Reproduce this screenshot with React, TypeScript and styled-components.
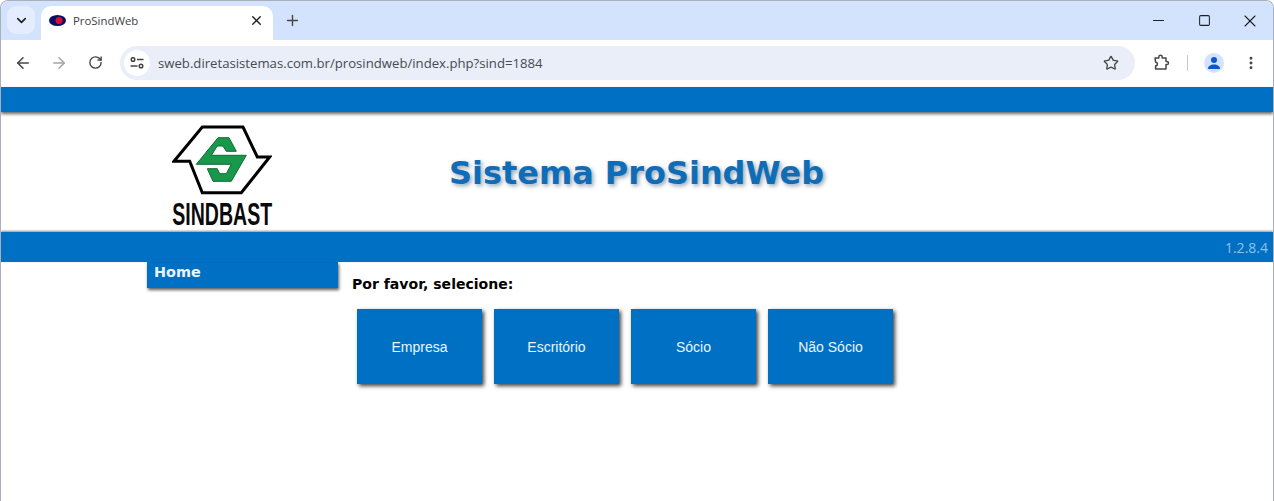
import React from "react";
import styled, { createGlobalStyle } from "styled-components";
import { ArrowLeft, ArrowRight, ChevronDown, EllipsisVertical, Minus, Plus, RotateCw, Square, Star, X } from "lucide-react";

const GlobalStyle = createGlobalStyle`
  html, body {
    margin: 0;
    padding: 0;
    background: #fff;
  }
  body {
    font-family: "Liberation Sans", Arial, sans-serif;
    overflow: hidden;
  }
`;

const Window = styled.div`
  width: 1274px;
  height: 501px;
  box-sizing: border-box;
  border: 1px solid #a9b0bb;
  border-bottom: 0;
  border-radius: 8px 8px 0 0;
  overflow: hidden;
  background: #fff;
  display: flex;
  flex-direction: column;
`;

const TabStrip = styled.div`
  height: 39px;
  background: #d3e3fd;
  display: flex;
  align-items: flex-end;
  padding-left: 6px;
  color: #1f1f1f;
`;

const TabSearch = styled.div`
  width: 28px;
  height: 28px;
  margin-bottom: 6px;
  border-radius: 9px;
  background: #e4edfd;
  display: flex;
  align-items: center;
  justify-content: center;
`;

const Tab = styled.div`
  width: 232px;
  height: 34px;
  margin-left: 6px;
  box-sizing: border-box;
  padding: 0 9px 5px 8px;
  background: #fff;
  border-radius: 10px 10px 0 0;
  display: flex;
  align-items: center;
  font-family: "Open Sans", "Noto Sans", sans-serif;
  font-size: 11.4px;
  color: #3c4043;
`;

const TabTitle = styled.span`
  flex: 1;
  margin-left: 7px;
`;

const NewTab = styled.div`
  width: 20px;
  margin: 0 0 11px 9px;
  display: flex;
  justify-content: center;
  color: #444746;
`;

const WindowControls = styled.div`
  margin-left: auto;
  align-self: stretch;
  display: flex;
  align-items: center;
  color: #1f1f1f;
`;

const WindowControl = styled.div`
  width: 46px;
  display: flex;
  justify-content: center;
`;

const Toolbar = styled.div`
  height: 47px;
  box-sizing: border-box;
  padding: 0 14px 2px 12px;
  background: #fff;
  display: flex;
  align-items: center;
  color: #474747;
`;

const NavButton = styled.div<{ $dim?: boolean }>`
  width: 20px;
  margin-right: 16px;
  display: flex;
  justify-content: center;
  color: ${(props) => (props.$dim ? "#a3a5a8" : "#474747")};
`;

const Omnibox = styled.div`
  width: 1015px;
  height: 34px;
  margin-left: -1px;
  background: #e9eef8;
  border-radius: 17px;
  display: flex;
  align-items: center;
  padding: 0 16px 0 4px;
  box-sizing: border-box;
`;

const SiteChip = styled.div`
  width: 26px;
  height: 26px;
  border-radius: 50%;
  background: #fff;
  display: flex;
  align-items: center;
  justify-content: center;
`;

const Url = styled.span`
  flex: 1;
  margin-left: 8px;
  font-family: "Open Sans", "Noto Sans", sans-serif;
  font-size: 13.17px;
  color: #474b50;
`;

const ToolbarEnd = styled.div`
  margin-left: 18px;
  flex: 1;
  display: flex;
  align-items: center;
  justify-content: space-between;
`;

const Divider = styled.div`
  width: 1px;
  height: 16px;
  background: #c7c9cc;
`;

const Avatar = styled.div`
  width: 20px;
  height: 20px;
  margin-right: 2px;
  border-radius: 50%;
  background: #d3e3fd;
  display: flex;
  align-items: center;
  justify-content: center;
`;

const Page = styled.div`
  flex: 1;
  display: flex;
  flex-direction: column;
`;

const TopBar = styled.div`
  height: 25px;
  background: #0070c4;
  box-shadow: 0 2px 3px rgba(0, 0, 0, 0.6);
  position: relative;
`;

const Masthead = styled.div`
  height: 120px;
  display: flex;
  align-items: flex-start;
  padding-left: 171px;
`;

const Brand = styled.div`
  width: 100px;
  margin-top: 13px;
  display: flex;
  flex-direction: column;
  align-items: center;
`;

const BrandName = styled.div`
  margin-top: 5px;
  font-family: "Liberation Sans", Arial, sans-serif;
  font-size: 31px;
  line-height: 30px;
  font-weight: 700;
  white-space: nowrap;
  color: #0a0a0a;
  transform: scaleX(0.63);
`;

const Title = styled.h1`
  margin: 41px 0 0 177px;
  font-family: "DejaVu Sans", Verdana, sans-serif;
  font-size: 31.95px;
  line-height: 40px;
  font-weight: 700;
  white-space: nowrap;
  color: #0f6db8;
  text-shadow: 2px 2px 4px rgba(60, 90, 120, 0.55);
`;

const NavBar = styled.div`
  height: 30px;
  background: #0070c4;
  box-shadow: 0 -1px 2px rgba(0, 0, 0, 0.45);
  display: flex;
  align-items: center;
  justify-content: flex-end;
  padding-right: 5px;
  font-family: "Open Sans", "Noto Sans", sans-serif;
  font-size: 14px;
  color: #8fc2ea;
  position: relative;
`;

const Body = styled.div`
  display: flex;
  align-items: flex-start;
  padding-left: 146px;
`;

const SideMenu = styled.div`
  width: 191px;
  height: 26px;
  box-sizing: border-box;
  padding: 0 7px;
  background: #0070c4;
  box-shadow: 1px 2px 3px rgba(0, 0, 0, 0.65);
  font-family: "DejaVu Sans", Verdana, sans-serif;
  font-size: 14.4px;
  line-height: 20px;
  font-weight: 700;
  color: #eaf6ff;
`;

const Content = styled.div`
  margin-left: 14px;
  padding-top: 13px;
`;

const Prompt = styled.div`
  font-family: "DejaVu Sans", Verdana, sans-serif;
  font-size: 14.05px;
  line-height: 18px;
  font-weight: 700;
  color: #000;
`;

const Choices = styled.div`
  display: flex;
  gap: 12px;
  margin: 16px 0 0 5px;
`;

const Choice = styled.div`
  width: 125px;
  height: 75px;
  background: #0070c4;
  box-shadow: 2px 2px 4px rgba(0, 0, 0, 0.75);
  display: flex;
  align-items: center;
  justify-content: center;
  font-size: 14px;
  color: #eaf6ff;
`;

const Favicon = () => (
  <svg width="17" height="11" viewBox="0 0 17 11">
    <ellipse cx="8.5" cy="5.5" rx="8.5" ry="5.5" fill="#0d0d66" />
    <circle cx="10" cy="5.5" r="3.5" fill="#d8102c" />
  </svg>
);

const SiteIcon = () => (
  <svg width="14" height="12" viewBox="0 0 14 12" fill="none" stroke="#444" strokeWidth="1.5">
    <circle cx="3" cy="2.5" r="1.8" />
    <path d="M7 2.5h6.5M0.5 9h7" />
    <circle cx="11" cy="9" r="1.8" />
  </svg>
);

const PuzzleIcon = () => (
  <svg width="17" height="17" viewBox="0 0 17 17" fill="none" stroke="#474747" strokeWidth="1.5" strokeLinejoin="round">
    <path d="M2 4h3.8V3a1.7 1.7 0 0 1 3.4 0v1H13v3.4h.9a1.6 1.6 0 0 1 0 3.2H13V15H2.6v-3.2a1.7 1.7 0 0 0 0-3.6z" />
  </svg>
);

const PersonIcon = () => (
  <svg width="14" height="14" viewBox="0 0 14 14" fill="#0b57d0">
    <circle cx="7" cy="4" r="3" />
    <path d="M1 13c0-3 2.6-4.6 6-4.6S13 10 13 13z" />
  </svg>
);

const Emblem = () => (
  <svg width="100" height="70" viewBox="0 0 100 70" style={{ display: "block" }}>
    <path
      d="M30.3 2H71L85.3 32H97.7L69.3 67.7H30.3L17.7 36.3H2z"
      fill="#fff"
      stroke="#000"
      strokeWidth="3"
      strokeLinejoin="miter"
    />
    <path
      d="M46 12.7H57L64.3 26.3H54.3L51 21H45.3L39.3 30.3H74.3L59.3 56.3H41L35.3 43.7H45.3L47.7 48.7H54.3L59.3 39.3H24.3z"
      fill="#17984a"
      stroke="#0f6a35"
      strokeWidth="1"
    />
  </svg>
);

const choices = ["Empresa", "Escritório", "Sócio", "Não Sócio"];

export default function App() {
  return (
    <>
      <GlobalStyle />
      <Window>
        <TabStrip>
          <TabSearch>
            <ChevronDown size={15} strokeWidth={2.6} />
          </TabSearch>
          <Tab>
            <Favicon />
            <TabTitle>ProSindWeb</TabTitle>
            <X size={15} strokeWidth={2.2} color="#1f1f1f" />
          </Tab>
          <NewTab>
            <Plus size={17} strokeWidth={2} />
          </NewTab>
          <WindowControls>
            <WindowControl>
              <Minus size={17} strokeWidth={1.5} />
            </WindowControl>
            <WindowControl>
              <Square size={13} strokeWidth={1.9} />
            </WindowControl>
            <WindowControl>
              <X size={20} strokeWidth={1.3} />
            </WindowControl>
          </WindowControls>
        </TabStrip>
        <Toolbar>
          <NavButton>
            <ArrowLeft size={18} strokeWidth={2} />
          </NavButton>
          <NavButton $dim>
            <ArrowRight size={18} strokeWidth={2} />
          </NavButton>
          <NavButton>
            <RotateCw size={15} strokeWidth={2.2} />
          </NavButton>
          <Omnibox>
            <SiteChip>
              <SiteIcon />
            </SiteChip>
            <Url>sweb.diretasistemas.com.br/prosindweb/index.php?sind=1884</Url>
            <Star size={16} strokeWidth={2} color="#474747" />
          </Omnibox>
          <ToolbarEnd>
            <PuzzleIcon />
            <Divider />
            <Avatar>
              <PersonIcon />
            </Avatar>
            <EllipsisVertical size={16} strokeWidth={2.4} />
          </ToolbarEnd>
        </Toolbar>
        <Page>
          <TopBar />
          <Masthead>
            <Brand>
              <Emblem />
              <BrandName>SINDBAST</BrandName>
            </Brand>
            <Title>Sistema ProSindWeb</Title>
          </Masthead>
          <NavBar>1.2.8.4</NavBar>
          <Body>
            <SideMenu>Home</SideMenu>
            <Content>
              <Prompt>Por favor, selecione:</Prompt>
              <Choices>
                {choices.map((label) => (
                  <Choice key={label}>{label}</Choice>
                ))}
              </Choices>
            </Content>
          </Body>
        </Page>
      </Window>
    </>
  );
}
